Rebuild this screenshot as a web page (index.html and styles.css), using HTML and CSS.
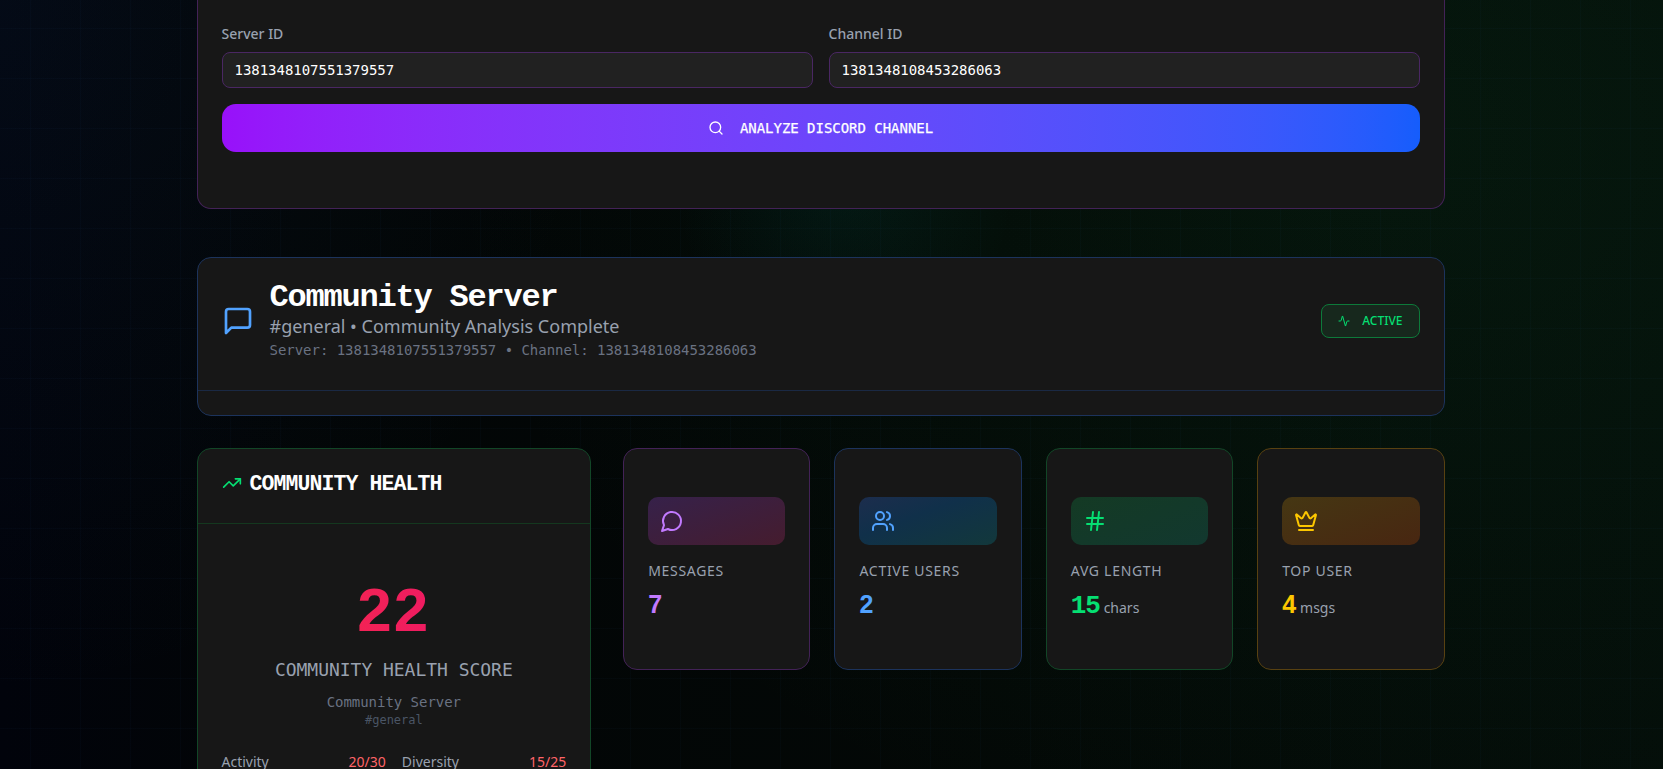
FILE: index.html
```html
<!DOCTYPE html>
<html lang="en">
<head>
<meta charset="utf-8">
<title>Community Analysis</title>
<link rel="stylesheet" href="styles.css">
</head>
<body>
<main class="page">
  <section class="card card-purple search">
    <div class="fields">
      <label class="field"><span class="field-label">Server ID</span><span class="input mono">1381348107551379557</span></label>
      <label class="field"><span class="field-label">Channel ID</span><span class="input mono">1381348108453286063</span></label>
    </div>
    <button class="analyze mono">
      <svg class="icon" width="16" height="16" viewBox="0 0 24 24"><circle cx="11" cy="11" r="8"/><path d="m21 21-4.3-4.3"/></svg>
      <span>ANALYZE DISCORD CHANNEL</span>
    </button>
  </section>

  <section class="card card-blue server">
    <header class="server-head">
      <svg class="icon blue" width="32" height="32" viewBox="0 0 24 24"><path d="M21 15a2 2 0 0 1-2 2H7l-4 4V5a2 2 0 0 1 2-2h14a2 2 0 0 1 2 2z"/></svg>
      <div class="server-info">
        <h1 class="server-name mono">Community Server</h1>
        <p class="server-sub">#general • Community Analysis Complete</p>
        <p class="server-ids mono">Server: 1381348107551379557 • Channel: 1381348108453286063</p>
      </div>
      <span class="badge">
        <svg class="icon" width="12" height="12" viewBox="0 0 24 24"><path d="M22 12h-2.48a2 2 0 0 0-1.93 1.46l-2.35 8.36a.25.25 0 0 1-.48 0L9.24 2.18a.25.25 0 0 0-.48 0l-2.35 8.36A2 2 0 0 1 4.49 12H2"/></svg>
        <span>ACTIVE</span>
      </span>
    </header>
  </section>

  <div class="dashboard">
    <section class="card card-green health">
      <header class="health-head">
        <svg class="icon green" width="20" height="20" viewBox="0 0 24 24"><path d="M22 7l-8.500 8.500-5-5L2 17"/><path d="M16 7h6v6"/></svg>
        <h2 class="health-title mono">COMMUNITY HEALTH</h2>
      </header>
      <div class="health-body">
        <div class="score">22</div>
        <div class="score-label mono">COMMUNITY HEALTH SCORE</div>
        <div class="score-server mono">Community Server</div>
        <div class="score-channel mono">#general</div>
        <div class="metrics">
          <div class="metric"><span>Activity</span><span class="red">20/30</span></div>
          <div class="metric"><span>Diversity</span><span class="red">15/25</span></div>
        </div>
      </div>
    </section>

    <div class="stats">
      <section class="card card-purple stat">
        <div class="chip chip-purple"><svg class="icon purple" width="24" height="24" viewBox="0 0 24 24"><path d="M7.900 20A9 9 0 1 0 4 16.100L2 22Z"/></svg></div>
        <p class="stat-label">MESSAGES</p>
        <p class="stat-value purple">7</p>
      </section>
      <section class="card card-blue stat">
        <div class="chip chip-blue"><svg class="icon blue" width="24" height="24" viewBox="0 0 24 24"><path d="M16 21v-2a4 4 0 0 0-4-4H6a4 4 0 0 0-4 4v2"/><circle cx="9" cy="7" r="4"/><path d="M22 21v-2a4 4 0 0 0-3-3.870"/><path d="M16 3.130a4 4 0 0 1 0 7.750"/></svg></div>
        <p class="stat-label">ACTIVE USERS</p>
        <p class="stat-value blue">2</p>
      </section>
      <section class="card card-green stat">
        <div class="chip chip-green"><svg class="icon green" width="24" height="24" viewBox="0 0 24 24"><path d="M4 9h16M4 15h16M10 3 8 21M16 3l-2 18"/></svg></div>
        <p class="stat-label">AVG LENGTH</p>
        <p class="stat-value stat-value-wide green">15<span class="unit">chars</span></p>
      </section>
      <section class="card card-yellow stat">
        <div class="chip chip-yellow"><svg class="icon yellow" width="24" height="24" viewBox="0 0 24 24"><path d="M11.562 3.266a.5.5 0 0 1 .876 0L15.390 8.870a1 1 0 0 0 1.516.294L21.183 5.500a.5.5 0 0 1 .798.519l-2.834 10.246a1 1 0 0 1-.956.734H5.810a1 1 0 0 1-.957-.734L2.020 6.020a.5.5 0 0 1 .798-.519l4.276 3.664a1 1 0 0 0 1.516-.294z"/><path d="M5 21h14"/></svg></div>
        <p class="stat-label">TOP USER</p>
        <p class="stat-value yellow">4<span class="unit">msgs</span></p>
      </section>
    </div>
  </div>
</main>
</body>
</html>
```

FILE: styles.css
```css
* { box-sizing: border-box; margin: 0; padding: 0; }
html, body { height: 100%; overflow: hidden; }
body {
  font-family: "Noto Sans", sans-serif;
  font-size: 14px;
  line-height: 20px;
  color: #99a1af;
  background:
    linear-gradient(90deg, rgba(59,130,246,.025) 1px, transparent 1px) 30px 0 / 50px 50px,
    linear-gradient(rgba(59,130,246,.025) 1px, transparent 1px) 0 28px / 50px 50px,
    radial-gradient(circle at 845px 190px, rgba(6,182,170,.07), transparent 170px),
    radial-gradient(ellipse 950px 760px at 84% 18%, rgba(22,130,60,.10), transparent),
    radial-gradient(ellipse 600px 700px at 0 0, rgba(40,100,160,.08), transparent),
    linear-gradient(90deg, #01030b, #020506 18%, #030806 60%, #040d09);
}
.mono { font-family: "DejaVu Sans Mono", monospace; letter-spacing: -.03px; }
.page {
  width: 1248px;
  margin-left: 196.5px;
  display: flex;
  flex-direction: column;
}
.card { background: #171717; border: 1px solid; border-radius: 14px; }
.card-purple { border-color: #432257; }
.card-blue { border-color: #1c335c; }
.card-green { border-color: #124627; }
.card-yellow { border-color: #584111; }
.icon { fill: none; stroke: currentColor; stroke-width: 2; stroke-linecap: round; stroke-linejoin: round; flex: none; display: block; }
.purple { color: #c27aff; }
.blue { color: #51a2ff; }
.green { color: #05df72; }
.yellow { color: #fdc700; }
.red { color: #ff6467; }

.search { height: 209px; border-top: 0; border-radius: 0 0 14px 14px; padding: 24px 24px 0; }
.fields { display: grid; grid-template-columns: 1fr 1fr; gap: 16px; }
.field-label { display: block; margin-bottom: 8px; font-weight: 500; }
.input {
  display: flex; align-items: center;
  height: 36px; padding: 0 12px;
  background: #212121; border: 1px solid #4a2763; border-radius: 8px;
  color: #fff;
}
.analyze {
  width: 100%; height: 48px; margin-top: 16px;
  display: flex; align-items: center; justify-content: center; gap: 16px;
  border: 0; border-radius: 14px;
  background: linear-gradient(90deg in oklab, #9810fa, #155dfc);
  color: #fff; font-size: 14px; font-weight: 500;
  -webkit-text-stroke: .25px #fff;
}

.server { margin-top: 48px; height: 159px; }
.server-head {
  display: flex; align-items: center; gap: 16px;
  height: 133px; padding: 0 24px 6px;
  border-bottom: 1px solid #1a2944;
}
.server-info { flex: 1; }
.server-name {
  font-family: "Liberation Mono", monospace;
  font-size: 32px; line-height: 32px; letter-spacing: -1.2px; color: #fff;
}
.server-sub { margin-top: -2px; font-size: 18px; line-height: 28px; }
.server-ids { color: #6a7282; }
.badge {
  display: flex; align-items: center; gap: 12px;
  height: 34px; padding: 0 16px;
  background: #17281d; border: 1px solid #0d7a3a; border-radius: 8px;
  color: #05df72; font-size: 12px; font-weight: 500;
}

.dashboard { margin-top: 32px; display: grid; grid-template-columns: 394.67px 1fr; gap: 32px; align-items: start; }
.health-head { display: flex; align-items: center; gap: 8px; height: 75px; padding: 0 24px 6px; border-bottom: 1px solid #14381f; }
.health-title {
  font-family: "Liberation Mono", monospace;
  font-size: 21.5px; line-height: 28px; letter-spacing: -.9px; padding-top: 2px; color: #fff;
}
.health-body { padding: 56px 24px 24px; text-align: center; }
.score {
  font-family: "Liberation Sans", sans-serif;
  font-size: 62px; line-height: 60px; font-weight: 700; letter-spacing: 2px;
  background: linear-gradient(90deg in oklab, #fb2c36, #e60076);
  -webkit-background-clip: text; background-clip: text; color: transparent;
}
.score-label { margin-top: 16px; font-size: 18px; line-height: 28px; }
.score-server { margin-top: 8px; color: #6a7282; }
.score-channel { font-size: 12px; line-height: 16px; color: #4a5565; }
.metrics { margin-top: 24px; display: grid; grid-template-columns: 1fr 1fr; gap: 16px; }
.metric { display: flex; justify-content: space-between; }

.stats { display: grid; grid-template-columns: repeat(4, 1fr); gap: 24px; }
.stat { height: 222px; padding: 48px 24px 0; }
.chip { height: 48px; padding: 12px; border-radius: 10px; }
.chip-purple { background: linear-gradient(160deg, #36214a, #451c2e); }
.chip-blue { background: linear-gradient(160deg, #1c2d4d, #10304a 40%, #12383b); }
.chip-green { background: linear-gradient(160deg, #143a24, #12382f); }
.chip-yellow { background: linear-gradient(160deg, #453713, #482611); }
.stat-label { margin-top: 16px; letter-spacing: .7px; }
.stat-value {
  margin-top: 7px;
  font-family: "Liberation Sans", sans-serif;
  font-size: 25px; line-height: 32px; font-weight: 700;
}
.stat-value-wide { margin-top: 9px; font-family: "Liberation Mono", monospace; font-size: 26px; letter-spacing: -1.2px; }
.unit { margin-left: 4px; font-family: "Noto Sans", sans-serif; font-size: 14px; font-weight: 400; letter-spacing: 0; color: #99a1af; }
```
